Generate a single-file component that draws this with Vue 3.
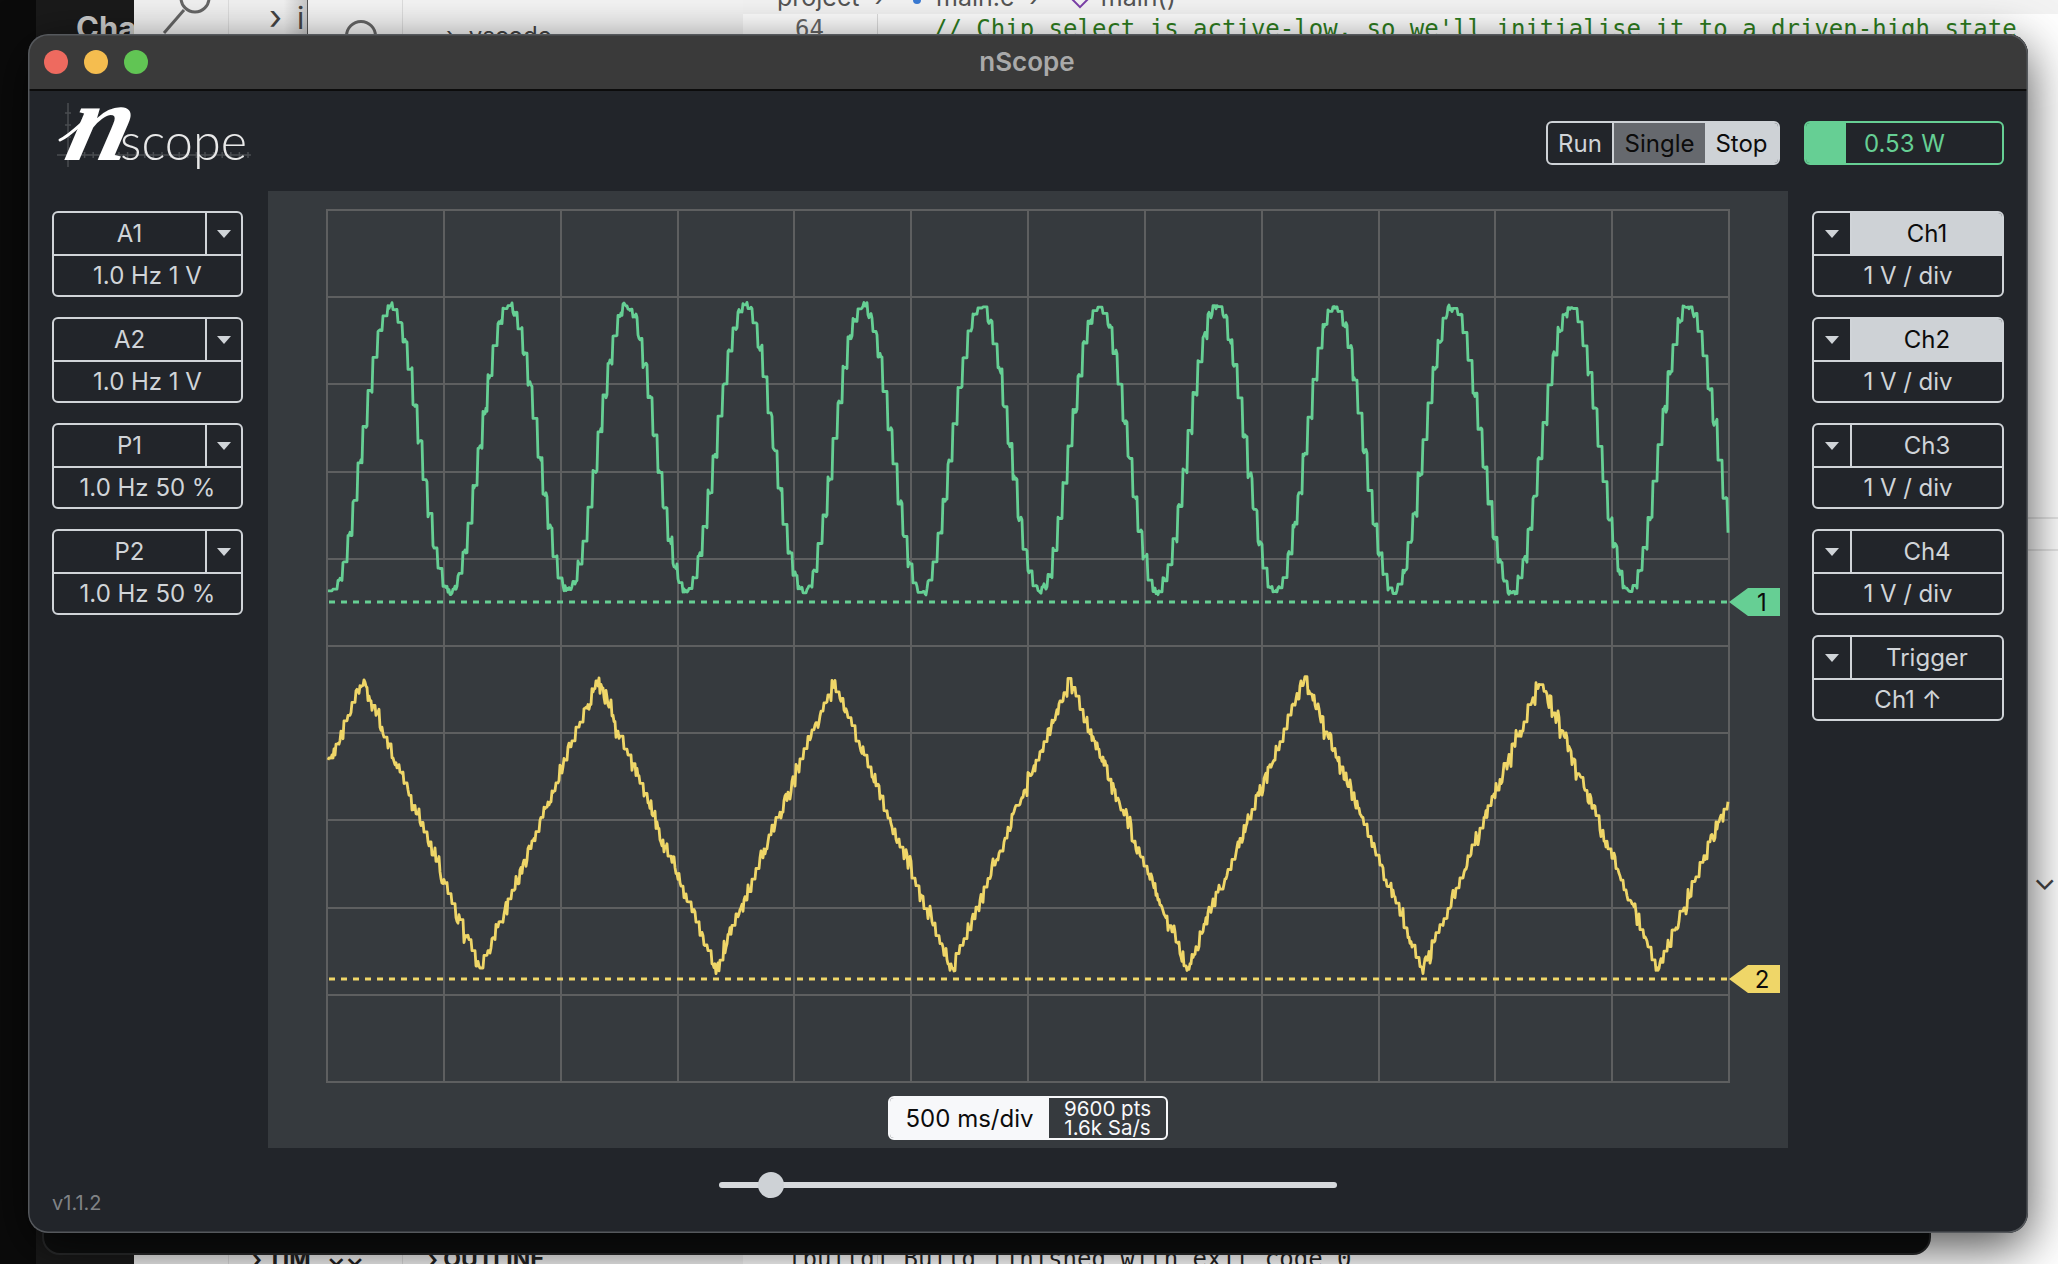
<script setup>
// seeded so the traces come out the same every load
function rng(seed) {
  return () => {
    seed = (seed + 0x6d2b79f5) | 0
    let t = Math.imul(seed ^ (seed >>> 15), 1 | seed)
    t = (t + Math.imul(t ^ (t >>> 7), 61 | t)) ^ t
    return ((t ^ (t >>> 14)) >>> 0) / 4294967296
  }
}

// x and y are in plot coordinates, the grid starts at 0,0
function trace(fn, hold, noise, seed) {
  const r = rng(seed)
  const pts = []
  let held = 0
  for (let x = 1; x <= 1401; x++) {
    if (x % hold === 1) held = fn(x + hold / 2) + (r() - 0.5) * noise
    const y = held + (r() < 0.3 ? (r() - 0.5) * noise * 1.8 : 0)
    pts.push(x + ',' + y.toFixed(1))
  }
  return pts.join(' ')
}

const sine = (x) => 239 - 143 * Math.cos((2 * Math.PI * (x - 65)) / 117.95)
const tri = (x) => {
  const p = (((x - 36) % 235.7) + 235.7) % 235.7
  const d = p < 117.85 ? p / 117.85 : 2 - p / 117.85
  return 470 + d * 290
}

const ch1Path = trace(sine, 5, 4, 11)
const ch2Path = trace(tri, 4, 8, 23)

const vLines = Array.from({ length: 13 }, (_, i) => 1 + Math.round((i * 1402) / 12))
const hLines = Array.from({ length: 11 }, (_, i) => 1 + Math.round(i * 87.2))

const logoTicks = Array.from({ length: 22 }, (_, i) => 24 + i * 8.6)

const outputs = [
  { name: 'A1', value: '1.0 Hz 1 V' },
  { name: 'A2', value: '1.0 Hz 1 V' },
  { name: 'P1', value: '1.0 Hz 50 %' },
  { name: 'P2', value: '1.0 Hz 50 %' },
]
const channels = [
  { name: 'Ch1', value: '1 V / div', on: true },
  { name: 'Ch2', value: '1 V / div', on: true },
  { name: 'Ch3', value: '1 V / div', on: false },
  { name: 'Ch4', value: '1 V / div', on: false },
  { name: 'Trigger', value: 'Ch1 ↑', on: false },
]
</script>

<template>
  <div class="desk">
    <!-- stuff behind the window -->
    <div class="bg-strip bg-black"></div>
    <div class="bg-strip bg-side"><span class="bg-cha">Cha</span></div>
    <div class="bg-strip bg-pane-a">
      <svg class="bg-search" width="60" height="34" viewBox="0 0 60 34">
        <circle cx="35" cy="-2" r="14" fill="none" stroke="#666" stroke-width="3" />
        <path d="M24 10 L4 33" stroke="#666" stroke-width="3" fill="none" />
      </svg>
    </div>
    <div class="bg-strip bg-pane-b"><span class="bg-crumb">›</span><span class="bg-i">i</span></div>
    <div class="bg-strip bg-pane-c"><div class="bg-circle"></div></div>
    <div class="bg-strip bg-pane-d"><span class="bg-folder">›&nbsp;&nbsp;vscode</span></div>
    <div class="bg-strip bg-editor">
      <div class="bg-breadcrumb">
        <span>project</span><span>›</span><i class="crumb-dot"></i><span>main.c</span><span>›</span><i class="crumb-cube"></i><span>main()</span>
      </div>
      <div class="bg-gutter"></div>
      <div class="bg-code"><span class="bg-lineno">64</span>// Chip select is active-low, so we'll initialise it to a driven-high state</div>
      <div class="bg-rule bg-rule-a"></div>
      <div class="bg-rule bg-rule-b"></div>
      <div class="bg-chevron">⌄</div>
    </div>
    <div class="bg-footer bg-tim">› TIM &nbsp; ⌄⌄</div>
    <div class="bg-footer bg-outline">› OUTLINE</div>
    <div class="bg-footer bg-build">[build] Build finished with exit code 0</div>

    <div class="back-window"></div>

    <div class="window">
      <div class="titlebar">
        <div class="dots">
          <span class="dot red"></span>
          <span class="dot yellow"></span>
          <span class="dot green"></span>
        </div>
        <div class="title">nScope</div>
      </div>

      <div class="content">
        <header class="head">
          <svg class="logo" width="200" height="76" viewBox="0 0 200 76">
            <g stroke="#4a4d51" stroke-width="1.5">
              <line x1="16" y1="2" x2="16" y2="66" />
              <line x1="5" y1="54" x2="199" y2="54" />
              <line v-for="t in logoTicks" :key="t" :x1="t" y1="51" :x2="t" y2="57" />
              <line x1="13" y1="12" x2="19" y2="12" />
              <line x1="13" y1="24" x2="19" y2="24" />
              <line x1="13" y1="36" x2="19" y2="36" />
            </g>
            <path d="M8 39 C19 34 29 22 42 12" fill="none" stroke="#fff" stroke-width="3" stroke-linecap="round" />
            <text class="logo-n" transform="translate(10 59) skewX(-14) scale(1.02 1)">n</text>
            <text x="68" y="59" class="logo-scope" textLength="127" lengthAdjust="spacingAndGlyphs">scope</text>
          </svg>
          <div class="head-right">
            <div class="run-group">
              <div class="seg seg-run">Run</div>
              <div class="seg seg-single">Single</div>
              <div class="seg seg-stop">Stop</div>
            </div>
            <div class="power">
              <div class="power-fill"></div>
              <div class="power-text">0.53 W</div>
            </div>
          </div>
        </header>

        <div class="main">
          <div class="side">
            <div v-for="o in outputs" :key="o.name" class="card">
              <div class="card-top">
                <div class="card-name">{{ o.name }}</div>
                <div class="caret-cell caret-right"><i class="caret"></i></div>
              </div>
              <div class="card-value">{{ o.value }}</div>
            </div>
          </div>

          <div class="plot">
            <svg class="scope" width="1456" height="875" viewBox="0 0 1456 875">
              <line v-for="x in vLines" :key="'v' + x" :x1="x" y1="0" :x2="x" y2="874" class="grid" />
              <line v-for="y in hLines" :key="'h' + y" x1="0" :y1="y" x2="1404" :y2="y" class="grid" />
              <g transform="translate(1 1)">
                <polyline :points="ch1Path" class="wave" stroke="#66cf94" />
                <polyline :points="ch2Path" class="wave" stroke="#efd668" />
                <line x1="2" y1="392" x2="1402" y2="392" class="dash" stroke="#66cf94" />
                <line x1="2" y1="769" x2="1402" y2="769" class="dash" stroke="#efd668" />
                <polygon points="1402,392 1421,378 1453,378 1453,406 1421,406" fill="#66cf94" />
                <text x="1435" y="401" class="marker">1</text>
                <polygon points="1402,769 1421,755 1453,755 1453,783 1421,783" fill="#efd668" />
                <text x="1435" y="778" class="marker">2</text>
              </g>
            </svg>
            <div class="time-pill">
              <div class="time-main">500 ms/div</div>
              <div class="time-info">
                <div>9600 pts</div>
                <div>1.6k Sa/s</div>
              </div>
            </div>
          </div>

          <div class="side side-right">
            <div v-for="c in channels" :key="c.name" class="card">
              <div class="card-top">
                <div class="caret-cell caret-left"><i class="caret"></i></div>
                <div class="card-name" :class="{ on: c.on }">{{ c.name }}</div>
              </div>
              <div class="card-value">{{ c.value }}</div>
            </div>
          </div>
        </div>

        <footer class="foot">
          <div class="version">v1.1.2</div>
          <div class="slider">
            <div class="thumb"></div>
          </div>
        </footer>
      </div>
    </div>
  </div>
</template>

<style>
html,
body {
  margin: 0;
  background: #fff;
}
</style>

<style scoped>
.desk {
  position: relative;
  width: 2058px;
  height: 1264px;
  overflow: hidden;
  background: #fff;
  font-family: Inter, "Liberation Sans", sans-serif;
}

.bg-strip {
  position: absolute;
  top: 0;
  bottom: 0;
  overflow: hidden;
}
.bg-black { left: 0; width: 36px; background: #0b0b0b; }
.bg-side { left: 36px; width: 98px; background: #1a1a1a; }
.bg-pane-a { left: 134px; width: 95px; background: #f1f1f1; border-right: 1px solid #ddd; box-sizing: border-box; }
.bg-pane-b { left: 229px; width: 78px; background: linear-gradient(90deg, #f1f1f1 70%, #c8c8c8); }
.bg-pane-c { left: 307px; width: 96px; background: #f4f4f4; border-left: 1px solid #555; border-right: 1px solid #ddd; box-sizing: border-box; }
.bg-pane-d { left: 403px; width: 340px; background: #f4f4f4; }
.bg-editor { left: 743px; right: 0; background: #fff; }

.bg-cha {
  position: absolute;
  left: 40px;
  top: 9px;
  font-size: 31px;
  font-weight: 700;
  color: #ccc;
}
.bg-search { position: absolute; left: 26px; top: 0; }
.bg-crumb { position: absolute; left: 40px; top: -4px; font-size: 34px; color: #444; }
.bg-i { position: absolute; left: 68px; top: 0; font-size: 30px; color: #444; }
.bg-circle {
  position: absolute;
  left: 37px;
  top: 20px;
  width: 32px;
  height: 32px;
  border: 3px solid #666;
  border-radius: 50%;
  box-sizing: border-box;
}
.bg-folder { position: absolute; left: 43px; top: 21px; font-size: 24px; color: #444; }
.bg-breadcrumb {
  height: 14px;
  background: #f3f3f3;
  line-height: 2px;
  padding-left: 34px;
  font-size: 25px;
  color: #555;
  overflow: hidden;
  display: flex;
  align-items: flex-start;
  gap: 15px;
}
.bg-breadcrumb span {
  margin-top: -4px;
}
.crumb-dot {
  width: 8px;
  height: 8px;
  margin: -4px 0 0 14px;
  border-radius: 50%;
  background: #3a7bd5;
}
.crumb-cube {
  width: 12px;
  height: 12px;
  margin: -6px 0 0 20px;
  border: 2px solid #7b3fa8;
  transform: rotate(45deg);
  box-sizing: border-box;
}
.bg-gutter {
  position: absolute;
  left: 134px;
  top: 14px;
  bottom: 0;
  width: 1px;
  background: #ddd;
}
.bg-code {
  position: absolute;
  left: 0;
  top: 15px;
  white-space: pre;
  font-family: "DejaVu Sans Mono", monospace;
  font-size: 24px;
  line-height: 28px;
  color: #2e7d1e;
  padding-left: 190px;
}
.bg-lineno {
  position: absolute;
  left: 52px;
  color: #666;
}
.bg-rule {
  position: absolute;
  left: 1285px;
  right: 0;
  height: 2px;
  background: #e6e6e6;
}
.bg-rule-a { top: 517px; }
.bg-rule-b { top: 549px; }
.bg-chevron {
  position: absolute;
  left: 1290px;
  top: 861px;
  font-size: 30px;
  color: #444;
}
.bg-footer {
  position: absolute;
  top: 1245px;
  color: #222;
  font-size: 23px;
  font-weight: 700;
}
.bg-tim { left: 252px; }
.bg-outline { left: 428px; }
.bg-build {
  left: 788px;
  font-family: "DejaVu Sans Mono", monospace;
  font-size: 24px;
  font-weight: 400;
}

.back-window {
  position: absolute;
  left: 42px;
  top: 60px;
  width: 1889px;
  height: 1195px;
  background: #0f1010;
  border-radius: 18px;
  box-sizing: border-box;
  border: 2px solid #2c2d2e;
}

.window {
  position: absolute;
  left: 28px;
  top: 34px;
  width: 2000px;
  height: 1199px;
  border-radius: 20px;
  overflow: hidden;
  background: #22252a;
  display: flex;
  flex-direction: column;
  box-shadow: 0 14px 50px rgba(0, 0, 0, 0.7);
}
.window::after {
  content: "";
  position: absolute;
  inset: 0;
  border-radius: 20px;
  box-shadow: inset 0 0 0 1.5px #55585c;
  pointer-events: none;
}

.titlebar {
  position: relative;
  flex: none;
  height: 55px;
  background: #3a3a3a;
  border-bottom: 2px solid #0c0c0c;
  display: flex;
  align-items: center;
  justify-content: center;
}
.dots {
  position: absolute;
  left: 16px;
  top: 16px;
  display: flex;
  gap: 16px;
}
.dot {
  width: 24px;
  height: 24px;
  border-radius: 50%;
}
.red { background: #ee6a5f; }
.yellow { background: #f5bd4f; }
.green { background: #61c554; }
.title {
  color: #a9a9a9;
  font-size: 26px;
  font-weight: 600;
  margin-left: -2px;
}

.content {
  flex: 1;
  display: flex;
  flex-direction: column;
  padding: 0 24px;
  min-height: 0;
}

.head {
  flex: none;
  height: 100px;
  display: flex;
  justify-content: space-between;
  align-items: flex-start;
}
.logo {
  margin-top: 10px;
  display: block;
}
.logo-n {
  font-family: "Liberation Serif", serif;
  font-style: italic;
  font-weight: 700;
  font-size: 112px;
  fill: #fff;
}
.logo-scope {
  font-family: Lato, Inter, sans-serif;
  font-weight: 300;
  font-size: 52px;
  fill: #e8e8e8;
}
.head-right {
  margin-top: 30px;
  display: flex;
  gap: 24px;
}

.run-group {
  width: 234px;
  height: 44px;
  box-sizing: border-box;
  border: 2px solid #ced2d6;
  border-radius: 6px;
  display: flex;
  overflow: hidden;
  font-size: 24px;
  line-height: 42px;
  text-align: center;
}
.seg-run {
  width: 64px;
  color: #d0d4d8;
  border-right: 2px solid #ced2d6;
}
.seg-single {
  width: 91px;
  background: #66696e;
  color: #0c0c0c;
}
.seg-stop {
  flex: 1;
  background: #ced2d6;
  color: #0c0c0c;
}

.power {
  width: 200px;
  height: 44px;
  box-sizing: border-box;
  border: 2px solid #66cf94;
  border-radius: 6px;
  display: flex;
  overflow: hidden;
}
.power-fill {
  width: 40px;
  background: #66cf94;
}
.power-text {
  margin-left: 18px;
  color: #66cf94;
  font-size: 24px;
  line-height: 42px;
}

.main {
  flex: none;
  height: 957px;
  display: flex;
  align-items: flex-start;
}
.side {
  flex: none;
  width: 191px;
  display: flex;
  flex-direction: column;
  gap: 20px;
  margin-top: 20px;
}
.side-right {
  width: 192px;
}

.card {
  height: 86px;
  box-sizing: border-box;
  border: 2px solid #d0d4d8;
  border-radius: 6px;
  overflow: hidden;
  color: #d0d4d8;
  font-size: 24px;
  text-align: center;
}
.card-top {
  display: flex;
  height: 43px;
  box-sizing: border-box;
  border-bottom: 2px solid #d0d4d8;
}
.card-name {
  flex: 1;
  line-height: 42px;
}
.card-name.on {
  background: #ced2d6;
  color: #0c0c0c;
}
.card-value {
  line-height: 40px;
}
.caret-cell {
  flex: none;
  box-sizing: border-box;
  display: flex;
  align-items: center;
  justify-content: center;
}
.caret-right { width: 36px; border-left: 2px solid #d0d4d8; }
.caret-left { width: 38px; border-right: 2px solid #d0d4d8; }
.caret {
  display: block;
  width: 0;
  height: 0;
  border-left: 7px solid transparent;
  border-right: 7px solid transparent;
  border-top: 8px solid #d0d4d8;
}

.plot {
  flex: none;
  width: 1520px;
  height: 957px;
  margin: 0 24px 0 25px;
  box-sizing: border-box;
  padding: 18px 0 0 58px;
  background: #363a3e;
  display: flex;
  flex-direction: column;
}
.scope {
  display: block;
  flex: none;
}
.grid {
  stroke: #5e5f60;
  stroke-width: 2;
}
.wave {
  fill: none;
  stroke-width: 2.8;
  stroke-linejoin: round;
}
.dash {
  stroke-width: 3;
  stroke-dasharray: 6 6;
}
.marker {
  font-size: 24px;
  fill: #0c0c0c;
  text-anchor: middle;
}

.time-pill {
  align-self: flex-start;
  margin: 12px 0 0 562px;
  width: 280px;
  height: 44px;
  box-sizing: border-box;
  border: 2px solid #f7f8fa;
  border-radius: 6px;
  display: flex;
  overflow: hidden;
  color: #f7f8fa;
  text-align: center;
}
.time-main {
  width: 159px;
  background: #f7f8fa;
  color: #0c0c0c;
  font-size: 24px;
  line-height: 42px;
}
.time-info {
  flex: 1;
  padding-top: 1px;
  font-size: 20.5px;
  line-height: 19px;
}

.foot {
  flex: 1;
  display: flex;
  min-height: 0;
}
.version {
  width: 667px;
  flex: none;
  margin-top: 43px;
  color: #808386;
  font-size: 20px;
}
.slider {
  position: relative;
  width: 618px;
  height: 6px;
  margin-top: 34px;
  border-radius: 3px;
  background: #d6d9dc;
}
.thumb {
  position: absolute;
  left: 39px;
  top: -10px;
  width: 26px;
  height: 26px;
  border-radius: 50%;
  background: #ced2d6;
}
</style>
